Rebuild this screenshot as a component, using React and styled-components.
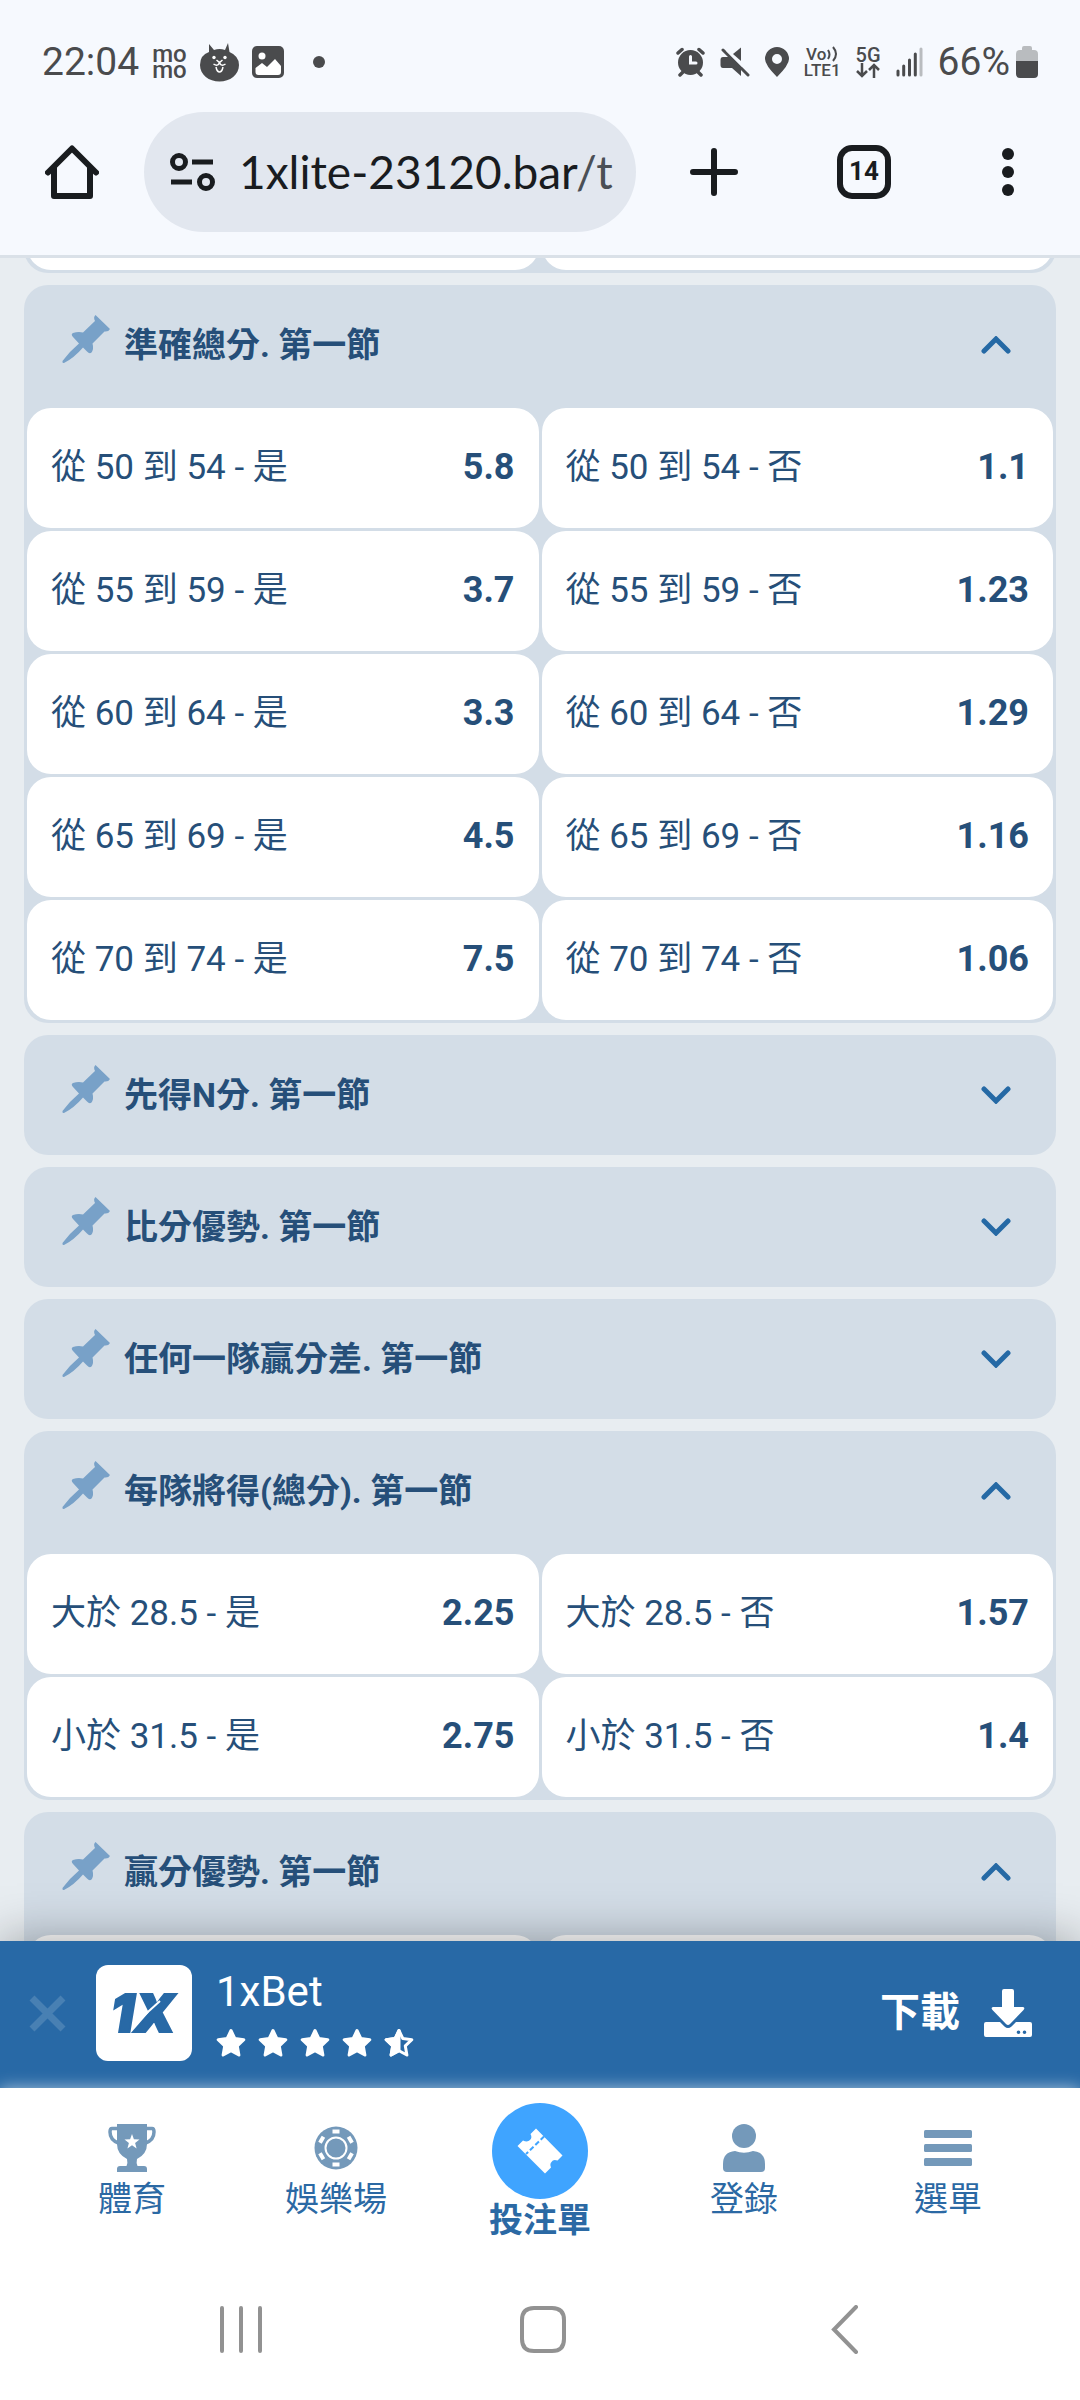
import React from 'react';
import styled, { createGlobalStyle } from 'styled-components';

const GlobalStyles = createGlobalStyle`
  * {
    box-sizing: border-box;
  }
  body {
    margin: 0;
    background-color: #e8edf1;
    font-family: Roboto, 'Noto Sans CJK TC', sans-serif;
    line-height: 1.2;
  }
  button {
    margin: 0;
    padding: 0;
    border: 0;
    background: none;
    color: inherit;
    font: inherit;
    text-align: left;
  }
  a {
    color: inherit;
    text-decoration: none;
  }
  svg {
    display: block;
    flex: none;
  }
`;

const Screen = styled.div`
  display: flex;
  flex-direction: column;
  height: 100vh;
`;

const Chrome = styled.header`
  flex: none;
  background-color: #f6f9fe;
  border-bottom: 3px solid #dae1e8;
`;

const StatusBar = styled.div`
  display: flex;
  justify-content: space-between;
  height: 112px;
  padding: 12px 42px 0 42px;
  color: #4a4b4d;
  font-size: 39px;
`;

const StatusGroup = styled.div`
  display: flex;
  align-items: center;
  gap: ${(props) => props.$gap}px;
`;

const StackedText = styled.div`
  display: flex;
  flex-direction: column;
  align-items: center;
  font-size: ${(props) => props.$size}px;
  line-height: 16px;
  font-weight: 500;
`;

const VoiceLabel = styled.span`
  display: flex;
  align-items: center;
  gap: 1px;
`;

const Toolbar = styled.div`
  display: grid;
  grid-template-columns: 144px 1fr 156px 144px 144px;
  align-items: center;
  padding-bottom: 23px;
  color: #191c1f;
`;

const ToolButton = styled.button`
  display: flex;
  justify-content: center;
`;

const AddressBar = styled.div`
  display: flex;
  align-items: center;
  gap: 24px;
  height: 120px;
  padding: 0 24px 0 26px;
  border-radius: 60px;
  background-color: #e2e7ef;
  overflow: hidden;
`;

const Url = styled.span`
  font-family: Lato, sans-serif;
  font-size: 46px;
  white-space: nowrap;
  span {
    color: #4a4f55;
  }
`;

const TabCount = styled.span`
  display: flex;
  align-items: center;
  justify-content: center;
  width: 54px;
  height: 54px;
  border: 6px solid #191c1f;
  border-radius: 15px;
  font-size: 26px;
  font-weight: 700;
`;

const Markets = styled.main`
  flex: 1;
  min-height: 0;
  overflow: hidden;
  padding: 0 24px;
`;

/* the list is scrolled so that only the last strip of the first group shows */
const MarketList = styled.div`
  display: flex;
  flex-direction: column;
  gap: 12px;
  margin-top: -108px;
`;

const Market = styled.section`
  border-radius: 24px;
  background-color: #d3dde7;
`;

const MarketHeader = styled.button`
  display: flex;
  align-items: center;
  width: 100%;
  height: 120px;
  padding: 0 45px 0 38px;
  gap: 14px;
  color: #264f79;
`;

const MarketTitle = styled.span`
  flex: 1;
  font-size: 34px;
  font-weight: 700;
`;

const Odds = styled.div`
  display: grid;
  grid-template-columns: 1fr 1fr;
  gap: 3px;
  padding: ${(props) => (props.$first ? 0 : 3)}px 3px 3px;
`;

const Odd = styled.button`
  display: flex;
  align-items: center;
  justify-content: space-between;
  height: 120px;
  padding: 0 24px;
  border-radius: 24px;
  background-color: #fff;
  color: #264f79;
  font-size: 35px;
  b {
    font-size: 36px;
    font-weight: 700;
  }
`;

const Banner = styled.aside`
  position: relative;
  flex: none;
  display: flex;
  align-items: center;
  height: 147px;
  padding: 0 48px 3px 29px;
  background-color: #2869a6;
  box-shadow: 0 0 48px rgba(0, 0, 0, 0.35);
  color: #fff;
`;

const AppIcon = styled.div`
  width: 96px;
  height: 96px;
  margin: 0 24px 0 30px;
  border-radius: 12px;
  background-color: #fff;
`;

const AppInfo = styled.div`
  flex: 1;
  display: flex;
  flex-direction: column;
  gap: 12px;
  font-size: 42px;
  line-height: 48px;
`;

const Stars = styled.div`
  display: flex;
  gap: 12px;
`;

const Download = styled.a`
  display: flex;
  align-items: center;
  gap: 24px;
  font-size: 40px;
  font-weight: 700;
`;

const BottomNav = styled.nav`
  position: relative;
  flex: none;
  display: grid;
  grid-template-columns: repeat(5, 1fr);
  height: 167px;
  padding: 15px 30px 0;
  background-color: #fff;
  box-shadow: 0 0 15px rgba(255, 255, 255, 0.6);
`;

const NavItem = styled.a`
  display: flex;
  flex-direction: column;
  align-items: center;
  gap: ${(props) => (props.$active ? 0 : 6)}px;
  padding-top: ${(props) => (props.$active ? 0 : 21)}px;
  color: #2b69a4;
  font-size: 34px;
  font-weight: ${(props) => (props.$active ? 700 : 400)};
  line-height: 43px;
  svg {
    color: #7499ba;
  }
`;

const SystemNav = styled.div`
  flex: none;
  display: grid;
  grid-template-columns: repeat(3, 1fr);
  padding: 50px 84px 46px 90px;
  background-color: #fff;
`;

const SystemButton = styled.button`
  display: flex;
  justify-content: center;
`;

const PinIcon = () => (
  <svg width="48" height="60" viewBox="0 0 48 60" fill="#78a1c8">
    <path d="M33.5 0 L48 14 Q46.500 17 42.500 16.500 L30.500 28.500 Q32 34 29.500 37.500 Q27.500 39.500 25 36.500 L21 32.500 Q12 43 2 48 Q0 48.500 0.500 46 Q8 36 17 28.500 L11 22 Q8.500 19 11 18 Q16 16.500 21 17.500 L33 6 Q31 2 33.500 0Z" />
  </svg>
);

const Chevron = ({ open }) => (
  <svg width="30" height="18" viewBox="0 0 30 18" fill="none" stroke="#2569a5" strokeWidth="5" strokeLinecap="round">
    <path d={open ? 'M3 15 L15 3 L27 15' : 'M3 3 L15 15 L27 3'} />
  </svg>
);

const STAR = 'M15 2.500 L18.800 10.500 L27.800 11.700 L21.300 17.900 L22.900 27 L15 22.700 L7.100 27 L8.700 17.900 L2.200 11.700 L11.200 10.500Z';

const Star = ({ half }) => (
  <svg width="30" height="30" viewBox="0 0 30 30" stroke="#fff" strokeWidth="3" strokeLinejoin="round" fill={half ? 'none' : '#fff'}>
    <path d={STAR} />
    {half && <path d="M15 2.500 V22.700 L7.100 27 L8.700 17.900 L2.200 11.700 L11.200 10.500Z" fill="#fff" />}
  </svg>
);

const CatIcon = () => (
  <svg width="39" height="39" viewBox="0 0 39 39">
    <path d="M9 1 L14 7 Q19.500 5 25 7 L28 0 L29.500 9 Q39 13 39 22 C39 32 30 38.500 19.500 38.500 S0 32 0 22 Q0 12 9 9Z" fill="#4a4b4d" />
    <circle cx="14" cy="14.500" r="1.700" fill="#fff" />
    <circle cx="25" cy="14.500" r="1.700" fill="#fff" />
    <path d="M16.500 17 L19.500 19.500 L22.500 17 M19.500 19.500 Q18 24 13.500 21 M19.500 19.500 Q21 24 25.500 21 M16 24 Q17 29 19.500 29 T23 24" fill="none" stroke="#fff" strokeWidth="1.500" />
  </svg>
);

const PhotoIcon = () => (
  <svg width="32" height="32" viewBox="0 0 32 32">
    <rect width="32" height="32" rx="5" fill="#4a4b4d" />
    <circle cx="10" cy="10" r="3.500" fill="#fff" />
    <path d="M3.500 22 L10 17 L15 21 L23 13 L29 20 V26 Q29 29 26 29 H6.500 Q3.500 29 3.500 26Z" fill="#fff" />
  </svg>
);

const AlarmIcon = () => (
  <svg width="29" height="30" viewBox="0 0 29 30" fill="none" stroke="#4a4b4d" strokeWidth="3.500" strokeLinecap="round">
    <circle cx="14.500" cy="15.500" r="12.500" fill="#4a4b4d" stroke="none" />
    <path d="M2 6 L6 2.500 M27 6 L23 2.500 M7 25 L4 28 M22 25 L25 28" />
    <path d="M14.500 9.500 V16 H20" stroke="#f6f9fe" strokeWidth="3" />
  </svg>
);

const MuteIcon = () => (
  <svg width="30" height="30" viewBox="0 0 30 30" fill="#4a4b4d">
    <path d="M3 10 H9 L21 22 V29 L12 21 H3 Q0.500 21 0.500 18 V13 Q0.500 10 3 10Z" />
    <path d="M13 7 L21 0.500 V14Z" />
    <path d="M3 3 L28 28" stroke="#4a4b4d" strokeWidth="3" strokeLinecap="round" />
    <path d="M7 3.500 L23 19.500" stroke="#f6f9fe" strokeWidth="2" />
  </svg>
);

const LocationIcon = () => (
  <svg width="24" height="30" viewBox="0 0 24 30">
    <path fillRule="evenodd" fill="#4a4b4d" d="M12 0 A12 12 0 0 1 24 12 Q24 18 12 30 Q0 18 0 12 A12 12 0 0 1 12 0Z M12 7 A5 5 0 1 0 12 17 A5 5 0 1 0 12 7Z" />
  </svg>
);

const VoiceWaves = () => (
  <svg width="11" height="16" viewBox="0 0 11 16" fill="none" stroke="#4a4b4d" strokeWidth="2">
    <path d="M1 4 Q4 8.500 1 13 M6 1 Q12 8 6 15" />
  </svg>
);

const DataArrows = () => (
  <svg width="24" height="15" viewBox="0 0 24 15" fill="none" stroke="#4a4b4d" strokeWidth="2.500">
    <path d="M6 0 V13 M1 8 L6 13 L11 8 M18 15 V2 M13 7 L18 2 L23 7" />
  </svg>
);

const SignalIcon = () => (
  <svg width="27" height="30" viewBox="0 0 27 30" strokeWidth="3" strokeLinecap="round" stroke="#4a4b4d">
    <path d="M2 24 V28 M7.700 19 V28 M13.500 13 V28 M19.300 7 V28" />
    <path d="M25 2 V28" stroke="#b9bcbf" />
  </svg>
);

const BatteryIcon = () => (
  <svg width="22" height="32" viewBox="0 0 22 32">
    <path d="M6 4 V2 Q6 0 8 0 H14 Q16 0 16 2 V4 H18 Q22 4 22 8 V15 H0 V8 Q0 4 4 4Z" fill="#b9bcbf" />
    <path d="M0 15 H22 V28 Q22 32 18 32 H4 Q0 32 0 28Z" fill="#4a4b4d" />
  </svg>
);

const HomeIcon = () => (
  <svg width="54" height="54" viewBox="0 0 54 54" fill="none" stroke="#191c1f" strokeWidth="6" strokeLinecap="round" strokeLinejoin="round">
    <path d="M3 27.500 L27 3.500 L51 27.500 M9 22 V51 H45 V22" />
  </svg>
);

const TuneIcon = () => (
  <svg width="45" height="39" viewBox="0 0 45 39" fill="none" stroke="#191c1f" strokeWidth="5">
    <circle cx="9" cy="9" r="6.500" />
    <circle cx="36" cy="29" r="6.500" />
    <path d="M22 9 H43 M1 29 H22" />
  </svg>
);

const PlusIcon = () => (
  <svg width="48" height="48" viewBox="0 0 48 48" stroke="#191c1f" strokeWidth="6" strokeLinecap="round">
    <path d="M24 3 V45 M3 24 H45" />
  </svg>
);

const MoreIcon = () => (
  <svg width="12" height="48" viewBox="0 0 12 48" fill="#191c1f">
    <circle cx="6" cy="6" r="6" />
    <circle cx="6" cy="24" r="6" />
    <circle cx="6" cy="42" r="6" />
  </svg>
);

const CloseIcon = () => (
  <svg width="37" height="37" viewBox="0 0 37 37" stroke="#4880b3" strokeWidth="7">
    <path d="M3 3 L34 34 M34 3 L3 34" />
  </svg>
);

const Logo = () => (
  <svg width="96" height="96" viewBox="0 0 96 96" role="img" aria-label="1X">
    <text x="47" y="67" textAnchor="middle" fontFamily="Inter, sans-serif" fontSize="52" fontWeight="900" fontStyle="italic" fill="#2869a6" stroke="#2869a6" strokeWidth="2">1X</text>
    <path d="M43 55 L64 36" stroke="#fff" strokeWidth="2" />
  </svg>
);

const DownloadIcon = () => (
  <svg width="48" height="48" viewBox="0 0 48 48" fill="#fff">
    <path d="M20 0 H28 Q30 0 30 2 V18 H39 Q41.500 18.500 39.500 21 L26 35 Q24 37 22 35 L8.500 21 Q6.500 18.500 9 18 H18 V2 Q18 0 20 0Z" />
    <path fillRule="evenodd" d="M2 33 H16 L20.500 37.500 Q24 40.500 27.500 37.500 L32 33 H46 Q48 33 48 35 V46 Q48 48 46 48 H2 Q0 48 0 46 V35 Q0 33 2 33Z M34.500 41.500 A1.800 1.800 0 1 0 34.500 45.100 A1.800 1.800 0 1 0 34.500 41.500Z M40.500 41.500 A1.800 1.800 0 1 0 40.500 45.100 A1.800 1.800 0 1 0 40.500 41.500Z" />
  </svg>
);

const TrophyIcon = () => (
  <svg width="48" height="48" viewBox="0 0 48 48" fill="currentColor">
    <path d="M9 0 H39 V20 Q39 30 29 35 Q28 39 29.500 42 H36 Q39 42 39 45 V48 H9 V45 Q9 42 12 42 H18.500 Q20 39 19 35 Q9 30 9 20Z" />
    <path d="M10 4.500 H4 Q2 4.500 2 8 Q2 16 10.500 19 M38 4.500 H44 Q46 4.500 46 8 Q46 16 37.500 19" fill="none" stroke="currentColor" strokeWidth="3.500" />
    <path d="M24 10 L25.900 15.300 L31.500 15.500 L27.100 19 L28.600 24.500 L24 21.300 L19.400 24.500 L20.900 19 L16.500 15.500 L22.100 15.300Z" fill="#fff" />
  </svg>
);

const ChipIcon = () => (
  <svg width="44" height="48" viewBox="0 0 44 48">
    <circle cx="22" cy="24" r="21.500" fill="currentColor" />
    <circle cx="22" cy="24" r="10.500" fill="none" stroke="#fff" strokeWidth="2" />
    {[0, 60, 120, 180, 240, 300].map((angle) => (
      <rect key={angle} x="18.500" y="5.500" width="7" height="4" fill="#fff" transform={`rotate(${angle} 22 24)`} />
    ))}
  </svg>
);

const TicketIcon = () => (
  <svg width="96" height="96" viewBox="0 0 96 96">
    <circle cx="48" cy="48" r="48" fill="#3fa4ff" />
    <path d="M44 25.500 L70.500 52.500 L65.500 57.500 Q61 56 59.500 59 Q57.500 61 59 64.500 L53 70.500 L25.500 43 L31 37.500 Q35.500 39.500 38 37 Q40.500 34.500 38.500 31Z" fill="#fff" />
    <path d="M34 51 L52 33.500" stroke="#3fa4ff" strokeWidth="2" strokeDasharray="5 2.500" strokeDashoffset="2" />
  </svg>
);

const PersonIcon = () => (
  <svg width="42" height="48" viewBox="0 0 42 48" fill="currentColor">
    <circle cx="21" cy="12" r="12" />
    <path d="M12 27 Q21 30.500 30 27 Q42 28 42 40 V44 Q42 48 38 48 H4 Q0 48 0 44 V40 Q0 28 12 27Z" />
  </svg>
);

const MenuIcon = () => (
  <svg width="48" height="48" viewBox="0 0 48 48" fill="currentColor">
    <rect y="6" width="48" height="8" rx="1.500" />
    <rect y="20" width="48" height="8" rx="1.500" />
    <rect y="34" width="48" height="8" rx="1.500" />
  </svg>
);

const SystemIcon = ({ d, width }) => (
  <svg width={width} height="49" viewBox={`0 0 ${width} 49`} fill="none" stroke="#929292" strokeWidth="4" strokeLinecap="round">
    <path d={d} />
  </svg>
);

const ranges = [
  ['50', '54', '5.8', '1.1'],
  ['55', '59', '3.7', '1.23'],
  ['60', '64', '3.3', '1.29'],
  ['65', '69', '4.5', '1.16'],
  ['70', '74', '7.5', '1.06'],
];

const exactTotal = ranges.flatMap(([from, to, yes, no]) => [
  { label: `從 ${from} 到 ${to} - 是`, value: yes },
  { label: `從 ${from} 到 ${to} - 否`, value: no },
]);

const teamTotal = [
  { label: '大於 28.5 - 是', value: '2.25' },
  { label: '大於 28.5 - 否', value: '1.57' },
  { label: '小於 31.5 - 是', value: '2.75' },
  { label: '小於 31.5 - 否', value: '1.4' },
];

const blank = [{}, {}];

const markets = [
  { title: '準確總分. 第一節', odds: exactTotal },
  { title: '先得N分. 第一節' },
  { title: '比分優勢. 第一節' },
  { title: '任何一隊贏分差. 第一節' },
  { title: '每隊將得(總分). 第一節', odds: teamTotal },
  { title: '贏分優勢. 第一節', odds: blank },
];

const navItems = [
  { label: '體育', icon: <TrophyIcon /> },
  { label: '娛樂場', icon: <ChipIcon /> },
  { label: '投注單', icon: <TicketIcon />, active: true },
  { label: '登錄', icon: <PersonIcon /> },
  { label: '選單', icon: <MenuIcon /> },
];

function OddsGrid({ odds, first }) {
  return (
    <Odds $first={first}>
      {odds.map((odd, i) => (
        <Odd key={i}>
          <span>{odd.label}</span>
          <b>{odd.value}</b>
        </Odd>
      ))}
    </Odds>
  );
}

function App() {
  return (
    <>
      <GlobalStyles />
      <Screen>
        <Chrome>
          <StatusBar>
            <StatusGroup $gap={13}>
              <span>22:04</span>
              <StackedText $size={24}>
                <span>mo</span>
                <span>mo</span>
              </StackedText>
              <CatIcon />
              <PhotoIcon />
              <svg width="52" height="12" viewBox="0 0 52 12">
                <circle cx="22" cy="6" r="6" fill="#4a4b4d" />
              </svg>
            </StatusGroup>
            <StatusGroup $gap={15}>
              <AlarmIcon />
              <MuteIcon />
              <LocationIcon />
              <StackedText $size={17}>
                <VoiceLabel>Vo<VoiceWaves /></VoiceLabel>
                <span>LTE1</span>
              </StackedText>
              <StackedText $size={20}>
                <span>5G</span>
                <DataArrows />
              </StackedText>
              <SignalIcon />
              <StatusGroup $gap={6}>
                <span>66%</span>
                <BatteryIcon />
              </StatusGroup>
            </StatusGroup>
          </StatusBar>
          <Toolbar>
            <ToolButton aria-label="Home"><HomeIcon /></ToolButton>
            <AddressBar>
              <TuneIcon />
              <Url>1xlite-23120.bar<span>/t</span></Url>
            </AddressBar>
            <ToolButton aria-label="New tab"><PlusIcon /></ToolButton>
            <ToolButton><TabCount>14</TabCount></ToolButton>
            <ToolButton aria-label="More"><MoreIcon /></ToolButton>
          </Toolbar>
        </Chrome>
        <Markets>
          <MarketList>
            <Market>
              <OddsGrid odds={blank} first />
            </Market>
            {markets.map((market) => (
              <Market key={market.title}>
                <MarketHeader aria-expanded={!!market.odds}>
                  <PinIcon />
                  <MarketTitle>{market.title}</MarketTitle>
                  <Chevron open={!!market.odds} />
                </MarketHeader>
                {market.odds && <OddsGrid odds={market.odds} />}
              </Market>
            ))}
          </MarketList>
        </Markets>
        <Banner>
          <button aria-label="Close"><CloseIcon /></button>
          <AppIcon><Logo /></AppIcon>
          <AppInfo>
            <span>1xBet</span>
            <Stars>
              <Star />
              <Star />
              <Star />
              <Star />
              <Star half />
            </Stars>
          </AppInfo>
          <Download href="#download">
            下載
            <DownloadIcon />
          </Download>
        </Banner>
        <BottomNav>
          {navItems.map((item) => (
            <NavItem key={item.label} href="#nav" $active={item.active}>
              {item.icon}
              {item.label}
            </NavItem>
          ))}
        </BottomNav>
        <SystemNav>
          <SystemButton aria-label="Recent apps"><SystemIcon width={44} d="M3 3 V46 M22 3 V46 M41 3 V46" /></SystemButton>
          <SystemButton aria-label="Home screen"><SystemIcon width={48} d="M15 3 H33 Q45 3 45 15 V34 Q45 46 33 46 H15 Q3 46 3 34 V15 Q3 3 15 3Z" /></SystemButton>
          <SystemButton aria-label="Back"><SystemIcon width={28} d="M25 2 L3 24.500 L25 47" /></SystemButton>
        </SystemNav>
      </Screen>
    </>
  );
}

export default App;
